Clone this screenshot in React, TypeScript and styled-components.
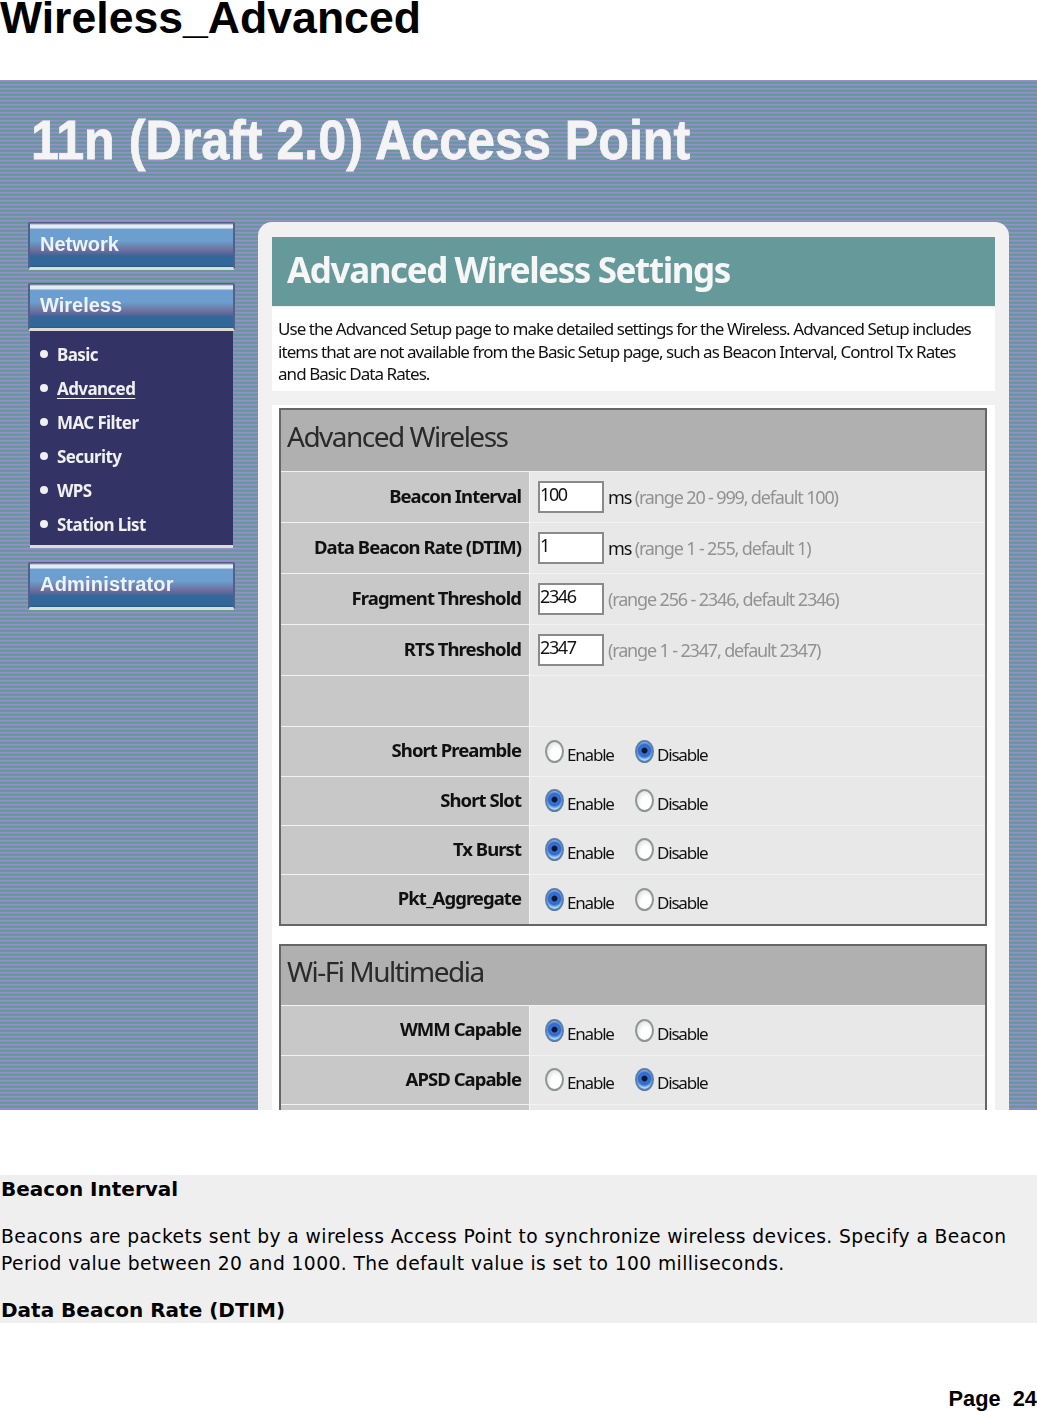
import React from "react";
import styled, { createGlobalStyle } from "styled-components";

const Global = createGlobalStyle`
  html, body { margin: 0; padding: 0; background: #fff; }
  body { overflow: hidden; }
  * { box-sizing: border-box; }
`;

const Page = styled.div`
  width: 1037px;
  height: 1411px;
  position: relative;
  overflow: hidden;
  background: #fff;
  color: #000;
`;

const PageTitle = styled.h1`
  margin: 0;
  height: 80px;
  font: bold 44.6px/36px "Liberation Sans", Arial, sans-serif;
  color: #000;
  white-space: nowrap;
`;

const Shot = styled.div`
  height: 1030px;
  overflow: hidden;
  background: repeating-linear-gradient(
    180deg,
    #9a8ed0 0px,
    #9090c8 1px,
    #6a9a9c 2px,
    #5c9a90 3px,
    #7c92b0 4px
  );
`;

const ShotInner = styled.div`
  filter: blur(0.35px);
`;

const ProductName = styled.div`
  height: 142px;
  padding: 28px 0 0 31px;
  font: bold 55px/64px "Liberation Sans", Arial, sans-serif;
  color: #f4f4f4;
  white-space: nowrap;
`;

const ProductText = styled.span`
  display: inline-block;
  transform: scaleX(0.9126);
  transform-origin: left top;
  -webkit-text-stroke: 0.8px #f4f4f4;
`;

const Columns = styled.div`
  display: flex;
  align-items: flex-start;
  padding-left: 28px;
`;

const Sidebar = styled.nav`
  width: 207px;
  display: flex;
  flex-direction: column;
`;

const MenuHead = styled.div<{ $mt?: number; $ls?: number }>`
  height: 48px;
  margin-top: ${(p) => p.$mt ?? 0}px;
  padding: 0 0 3px 10px;
  display: flex;
  align-items: center;
  border: 2px solid #55608a;
  border-top-width: 1px;
  border-bottom: 3px solid #dcdcd4;
  border-radius: 2px;
  font: bold 20px/1 "Liberation Sans", Arial, sans-serif;
  letter-spacing: ${(p) => p.$ls ?? 0}px;
  color: #eef2f6;
  background: linear-gradient(
    180deg,
    #55608a 0,
    #e4ecf2 2px,
    #e4ecf2 5px,
    #6d9ed0 6px,
    #6d9ed0 18px,
    #6a8cb4 22px,
    #6f6a9c 28px,
    #336699 33px,
    #336699 42px,
    #2a5a80 44px
  );
`;

const SubMenu = styled.ul`
  list-style: none;
  margin: 0 2px;
  padding: 6px 0 4px;
  height: 217px;
  background: #333366;
  border-bottom: 3px solid #dcdcd4;
  display: flex;
  flex-direction: column;
`;

const SubItem = styled.li<{ $active?: boolean }>`
  height: 34px;
  padding-left: 10px;
  display: flex;
  align-items: center;
  gap: 9px;
  font: bold 17px/1 "Noto Sans", sans-serif;
  letter-spacing: -0.6px;
  color: #f0f0f0;
  text-decoration: ${(p) => (p.$active ? "underline" : "none")};
  text-underline-offset: 3px;
`;

const Bullet = styled.span`
  width: 8px;
  height: 8px;
  border-radius: 50%;
  background: #f0f0f0;
  flex: none;
`;

const Card = styled.section`
  width: 751px;
  margin-left: 23px;
  padding: 15px 14px 0;
  background: #f1f1f1;
  border-radius: 14px 14px 0 0;
`;

const CardHead = styled.div`
  height: 69px;
  padding: 0 0 4px 15px;
  display: flex;
  align-items: center;
  background: #669999;
  color: #f6f6f6;
  font: bold 35px/1 "Noto Sans", sans-serif;
  letter-spacing: -1.4px;
  white-space: nowrap;
`;

const Intro = styled.p`
  margin: 1px 0 0;
  height: 84px;
  padding: 11px 6px 0;
  background: #fff;
  color: #111;
  font: 17px/22.5px "Noto Sans", sans-serif;
  letter-spacing: -0.94px;
  white-space: pre;
`;

const Forms = styled.div`
  margin-top: 14px;
  padding: 3px 8px 0 7px;
  background: #fff;
`;

const Fieldset = styled.div<{ $mb?: number }>`
  border: 2px solid #666;
  margin-bottom: ${(p) => p.$mb ?? 0}px;
  background: #f4f4f4;
`;

const TableHead = styled.h2<{ $h: number }>`
  margin: 0;
  height: ${(p) => p.$h}px;
  padding: 0 0 9px 6px;
  display: flex;
  align-items: center;
  background: #b0b0b0;
  color: #2a2a2a;
  font: 400 28px/1 "Noto Sans", sans-serif;
  letter-spacing: -1.5px;
`;

const Row = styled.div<{ $h: number }>`
  height: ${(p) => p.$h}px;
  display: grid;
  grid-template-columns: 248px 1fr;
  column-gap: 1px;
  border-top: 1px solid #f2f2f2;
`;

const Label = styled.div`
  background: #c8c8c8;
  display: flex;
  align-items: center;
  justify-content: flex-end;
  padding: 0 8px 2px 0;
  font: bold 18.5px/1 "Noto Sans", sans-serif;
  letter-spacing: -0.95px;
  color: #111;
`;

const Value = styled.div`
  background: #e8e8e8;
  display: flex;
  align-items: center;
  padding-left: 8px;
  font: 18px/1 "Noto Sans", sans-serif;
  letter-spacing: -1.15px;
  color: #111;
`;

const TextBox = styled.input`
  width: 66px;
  height: 32px;
  margin: -1px 4px 0 0;
  padding: 0 0 5px 0;
  border: 2px solid #8a8a8a;
  border-radius: 0;
  background: #fff;
  color: #111;
  font: 18px/1 "Noto Sans", sans-serif;
  letter-spacing: -1.4px;
  outline: none;
`;

const Hint = styled.span`
  color: #929292;
`;

const Radios = styled.div`
  display: flex;
  padding-left: 7px;
`;

const RadioItem = styled.span`
  width: 90px;
  display: flex;
  align-items: flex-start;
  gap: 3px;
`;

const RadioDot = styled.span<{ $on?: boolean }>`
  width: 19px;
  height: 23px;
  border-radius: 50%;
  flex: none;
  border: 2px solid ${(p) => (p.$on ? "#5c7ea8" : "#8f9794")};
  background: ${(p) =>
    p.$on
      ? "radial-gradient(circle at 50% 45%, #101830 0 2.5px, #3a74d8 3.5px, #2f68d0 6px, #a4d4f0 9px)"
      : "radial-gradient(ellipse at 60% 70%, #ffffff 0 5px, #e6e6e6 9px, #cccccc 12px)"};
`;

const RadioText = styled.span`
  margin-top: 6px;
  font-size: 17px;
  line-height: 18px;
  letter-spacing: -1.2px;
`;

const Article = styled.article`
  margin-top: 65px;
  height: 148px;
  background: #efefef;
  padding-left: 1px;
  color: #000;
`;

const ArticleHead = styled.h3`
  margin: 0;
  height: 27px;
  font: bold 20px/28px "DejaVu Sans", Verdana, sans-serif;
  white-space: nowrap;
`;

const ArticleText = styled.p`
  margin: 21px 0 19px;
  font: 18.7px/27px "DejaVu Sans", Verdana, sans-serif;
  letter-spacing: 0.42px;
  white-space: pre;
`;

const PageNo = styled.div`
  position: absolute;
  right: 0;
  bottom: 0;
  font: bold 21.8px/24px "Liberation Sans", Arial, sans-serif;
  white-space: pre;
`;

type RadioRow = { name: string; on: "Enable" | "Disable"; h: number };

const Radio = ({ on, text }: { on: boolean; text: string }) => (
  <RadioItem>
    <RadioDot $on={on} />
    <RadioText>{text}</RadioText>
  </RadioItem>
);

const RadioRowView = ({ name, on, h }: RadioRow) => (
  <Row $h={h}>
    <Label>{name}</Label>
    <Value>
      <Radios>
        <Radio on={on === "Enable"} text="Enable" />
        <Radio on={on === "Disable"} text="Disable" />
      </Radios>
    </Value>
  </Row>
);

const sub = ["Basic", "Advanced", "MAC Filter", "Security", "WPS", "Station List"];

export default function App() {
  return (
    <Page>
      <Global />
      <PageTitle>Wireless_Advanced</PageTitle>
      <Shot>
        <ShotInner>
          <ProductName>
            <ProductText>11n (Draft 2.0) Access Point</ProductText>
          </ProductName>
          <Columns>
            <Sidebar>
              <MenuHead>Network</MenuHead>
              <MenuHead $mt={13}>Wireless</MenuHead>
              <SubMenu>
                {sub.map((s) => (
                  <SubItem key={s} $active={s === "Advanced"}>
                    <Bullet />
                    {s}
                  </SubItem>
                ))}
              </SubMenu>
              <MenuHead $mt={14} $ls={0.2}>Administrator</MenuHead>
            </Sidebar>
            <Card>
              <CardHead>Advanced Wireless Settings</CardHead>
              <Intro>
                {"Use the Advanced Setup page to make detailed settings for the Wireless. Advanced Setup includes\nitems that are not available from the Basic Setup page, such as Beacon Interval, Control Tx Rates\nand Basic Data Rates."}
              </Intro>
              <Forms>
                <Fieldset $mb={18}>
                  <TableHead $h={61}>Advanced Wireless</TableHead>
                  <Row $h={51}>
                    <Label>Beacon Interval</Label>
                    <Value>
                      <TextBox defaultValue="100" readOnly />
                      ms&nbsp;<Hint>(range 20 - 999, default 100)</Hint>
                    </Value>
                  </Row>
                  <Row $h={51}>
                    <Label>Data Beacon Rate (DTIM)</Label>
                    <Value>
                      <TextBox defaultValue="1" readOnly />
                      ms&nbsp;<Hint>(range 1 - 255, default 1)</Hint>
                    </Value>
                  </Row>
                  <Row $h={51}>
                    <Label>Fragment Threshold</Label>
                    <Value>
                      <TextBox defaultValue="2346" readOnly />
                      <Hint>(range 256 - 2346, default 2346)</Hint>
                    </Value>
                  </Row>
                  <Row $h={51}>
                    <Label>RTS Threshold</Label>
                    <Value>
                      <TextBox defaultValue="2347" readOnly />
                      <Hint>(range 1 - 2347, default 2347)</Hint>
                    </Value>
                  </Row>
                  <Row $h={51}>
                    <Label />
                    <Value />
                  </Row>
                  <RadioRowView name="Short Preamble" on="Disable" h={50} />
                  <RadioRowView name="Short Slot" on="Enable" h={49} />
                  <RadioRowView name="Tx Burst" on="Enable" h={49} />
                  <RadioRowView name="Pkt_Aggregate" on="Enable" h={50} />
                </Fieldset>
                <Fieldset>
                  <TableHead $h={59}>Wi-Fi Multimedia</TableHead>
                  <RadioRowView name="WMM Capable" on="Enable" h={50} />
                  <RadioRowView name="APSD Capable" on="Disable" h={49} />
                  <Row $h={50}>
                    <Label />
                    <Value />
                  </Row>
                </Fieldset>
              </Forms>
            </Card>
          </Columns>
        </ShotInner>
      </Shot>
      <Article>
        <ArticleHead>Beacon Interval</ArticleHead>
        <ArticleText>
          {"Beacons are packets sent by a wireless Access Point to synchronize wireless devices. Specify a Beacon\nPeriod value between 20 and 1000. The default value is set to 100 milliseconds."}
        </ArticleText>
        <ArticleHead>Data Beacon Rate (DTIM)</ArticleHead>
      </Article>
      <PageNo>{"Page  24"}</PageNo>
    </Page>
  );
}
